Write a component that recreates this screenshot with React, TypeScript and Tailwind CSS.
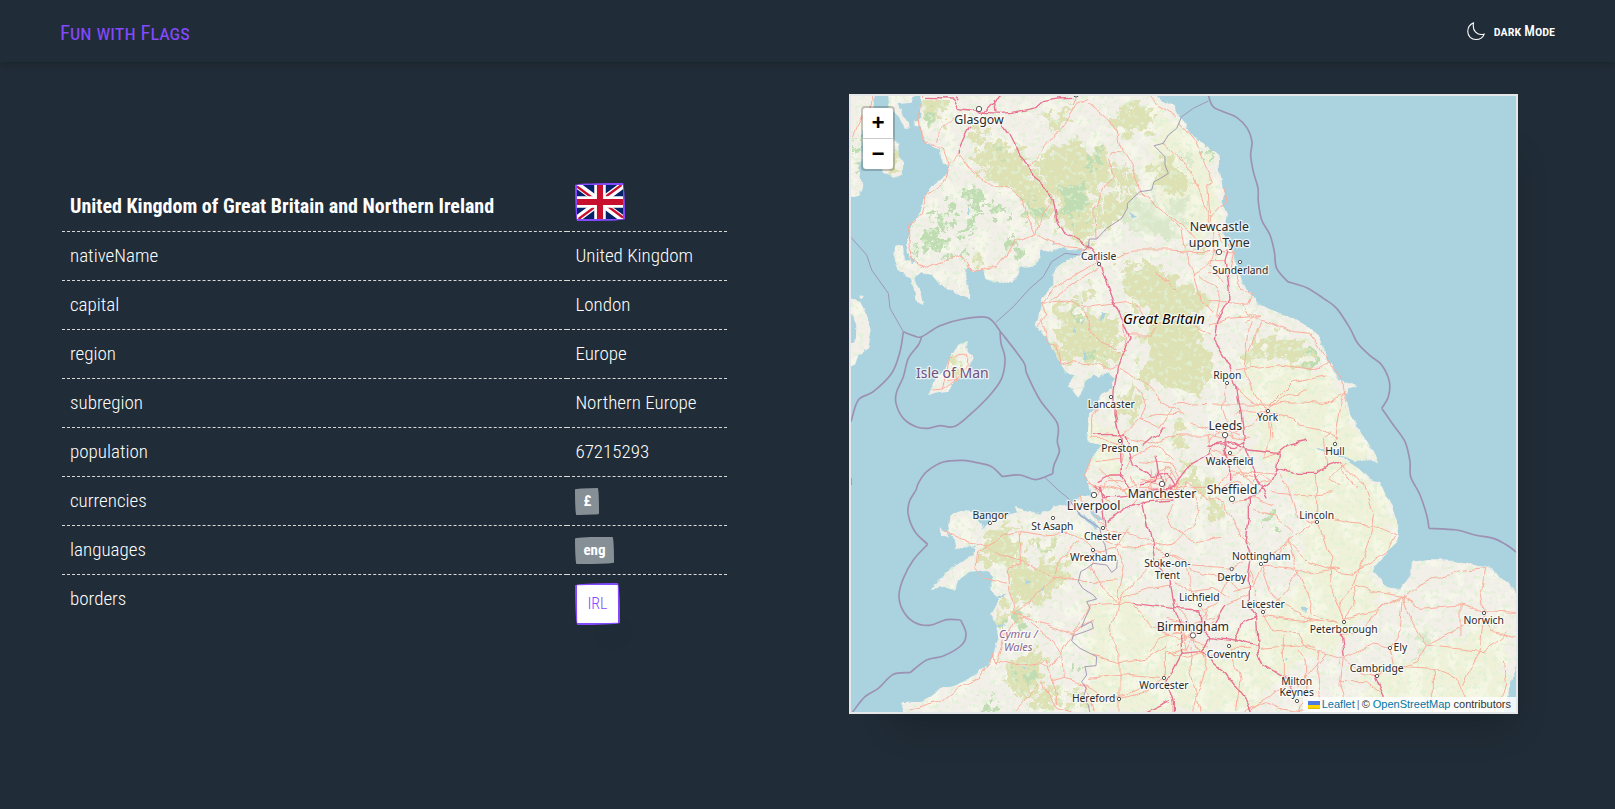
import React from 'react';

type Label = { x: number; y: number; text: string; size?: 'big' | 'small' };

const LAND = [
  // Great Britain
  'M245 20L240 100 245 150 255 175 300 195 305 230 330 245 312 278 285 300 255 330 247 372 215 420 203 465 200 500 212 525 197 528 188 484 165 484 163 520 176 555 210 578 220 620 228 650 250 660 243 625 222 580 245 560 275 570 300 600 330 610 360 630 387 640 388 600 375 560 385 546 400 562 430 555 437 582 460 592 495 595 530 575 545 550 578 545 602 520 600 490 635 500 670 490 705 497 728 492 722 512 685 522 652 545 640 570 640 600 608 642 600 685 585 718 610 750 640 790 658 830 675 866 700 870 684 905 712 935 742 882 760 868 775 885 802 862 822 880 815 905 785 935 765 975 748 990 742 1070 785 1080 755 1120 735 1165 745 1185 755 1235 725 1232 695 1250 685 1275 735 1290 775 1325 765 1335 715 1290 680 1258 640 1270 600 1283 550 1275 525 1265 535 1282 505 1290 468 1302 440 1320 415 1345 395 1380 400 1400 375 1428 350 1435 318 1458 300 1480 275 1512 312 1505 345 1517 355 1485 390 1460 440 1455 458 1475 447 1510 478 1545 453 1590 470 1620 475 1660 460 1710 445 1738 400 1772 350 1800 298 1815 250 1850 215 1852 190 1855 190 1900 1980 1900 1998 1850 2010 1800 2040 1700 2040 1535 2005 1495 1960 1460 1935 1445 1880 1437 1840 1427 1760 1425 1715 1430 1708 1475 1680 1512 1632 1500 1597 1460 1625 1415 1672 1370 1675 1320 1655 1265 1630 1215 1620 1190 1585 1180 1555 1150 1520 1128 1470 1105 1420 1090 1385 1085 1440 1090 1490 1090 1510 1113 1545 1128 1585 1122 1617 1138 1600 1095 1560 1040 1530 990 1518 930 1522 910 1555 904 1500 885 1480 855 1460 825 1450 780 1425 743 1390 715 1345 692 1280 670 1255 655 1230 620 1205 595 1190 545 1180 490 1150 450 1160 395 1145 350 1150 320 1142 270 1135 210 1115 195 1070 165 1040 125 1015 90 1005 60 960 40 940 20Z',
  // Isle of Man
  'M386 765L355 778 335 810 318 850 285 885 262 930 285 920 325 915 350 885 380 860 398 818 384 800Z',
  // Anglesey
  'M332 1290L325 1340 345 1365 350 1395 390 1385 430 1360 425 1325 412 1300 405 1282 365 1278ZM298 1328L322 1340 330 1358 305 1350Z',
  // Irish coast
  'M20 640L60 650 75 680 92 735 80 795 55 810 45 840 20 848 20 790 50 770 52 725 35 690 20 680Z',
  // Kintyre, Arran and Bute
  'M20 20L105 20 100 75 70 110 66 190 55 285 70 300 62 330 20 338Z',
  'M150 155L175 175 176 210 190 235 188 270 165 278 125 262 122 230 140 190Z',
  'M140 20L225 20 215 50 175 55 190 95 210 130 195 132 172 90 145 68Z',
  'M55 630L72 632 66 642 58 640ZM55 158L70 158 72 165 58 165Z',
  'M225 110L238 108 240 120 228 126Z',
].join('');

const ARABLE =
  'M1200 800L1460 870 1520 960 1590 1110 1560 1150 1640 1240 1670 1360 1590 1470 1650 1520 1560 1620 1480 1700 1380 1720 1220 1880 760 1880 740 1560 820 1480 960 1620 1150 1720 1240 1600 1380 1500 1400 1300 1340 1180 1240 1080 1230 950Z M960 60L1100 200 1150 420 1080 470 960 380 920 240Z M740 1000L850 1050 830 1180 760 1160ZM1580 1780L2000 1600 2000 1880 1580 1880Z';

const HEATH =
  'M250 50L310 45 315 90 270 135 250 110ZM385 130L450 145 445 175 385 180ZM400 205L480 175 520 185 560 235 590 280 640 310 630 390 600 415 570 400 540 330 480 300 420 250ZM575 240L630 200 700 160 720 190 815 200 815 280 760 330 765 450 740 470 690 450 670 430 640 330 610 280ZM620 100L700 60 690 110 620 140ZM815 95L870 50 950 75 930 130 860 160ZM780 330L900 320 860 380 820 420 765 450ZM830 240L880 270 885 315 830 310ZM930 230L985 220 1050 290 1030 330 950 300ZM840 530L940 545 1050 610 1110 640 1090 690 1060 760 1110 790 1130 850 1100 900 1020 890 960 850 900 770 930 690 870 640ZM640 700L700 650 730 690 850 700 840 760 820 840 760 830 680 830 650 780ZM710 615L765 625 750 665 710 655ZM935 790L1040 850 1090 870 1080 930 960 900 890 870ZM830 930L900 925 905 980 860 995 835 970ZM985 1055L1035 1010 1040 1070 1000 1080ZM1020 1100L1060 1150 1100 1190 1120 1210 1070 1230 1035 1200ZM1100 1230L1150 1270 1155 1325 1110 1290ZM1225 850L1270 800 1330 815 1390 840 1440 850 1430 820 1400 770 1340 760 1290 730 1250 770 1215 800ZM490 1310L535 1320 520 1380 540 1430 500 1440 420 1430 430 1380 465 1350ZM500 1440L580 1430 640 1440 700 1430 660 1500 620 1550 560 1545 510 1520ZM560 1360L640 1365 640 1400 580 1400ZM480 1560L560 1560 530 1620 470 1600ZM520 1720L590 1690 620 1740 580 1830 540 1850 500 1790ZM580 1830L640 1800 660 1870 560 1880ZM385 540L420 520 430 555 405 560ZM325 830L370 815 365 850 330 865ZM140 170L170 190 180 250 130 255ZM1020 490L1120 470 1110 490 1030 500ZM690 1830L740 1820 740 1880 700 1880Z';

const WOOD =
  'M240 435L290 430 330 460 300 520 250 480ZM270 395L320 390 330 430 290 420ZM360 320L400 290 430 340 410 380 370 350ZM370 400L420 385 400 440 380 450ZM670 310L740 290 750 330 720 410 680 380ZM750 200L780 205 760 250 740 240ZM440 350L500 370 480 410 440 390ZM330 350L350 365 340 390 325 370ZM250 70L290 90 275 125 255 110ZM40 150L65 160 60 190 36 190ZM36 220L65 225 60 255 36 255ZM370 470L400 490 380 520 365 500ZM500 470L550 480 540 510 510 495ZM220 490L240 495 235 510 220 505ZM735 780L770 790 775 830 745 820ZM710 660L725 690 705 710ZM1390 820L1440 830 1420 850 1395 845ZM1380 790L1430 800 1420 815 1385 815ZM500 1600L550 1590 555 1620 510 1630ZM590 1375L640 1385 630 1395 600 1390ZM540 1760L580 1750 570 1800 545 1810ZM420 1850L470 1845 465 1880 425 1880ZM1270 1285L1300 1290 1295 1320 1275 1325ZM700 1730L720 1735 712 1755 700 1750ZM1080 210L1100 190 1105 210 1090 220ZM480 190L500 195 490 220ZM560 330L600 380 590 400 560 380Z';

const PALE_WOOD =
  'M850 360L920 340 1000 400 1000 450 920 460 860 430ZM960 330L1040 360 1050 400 990 390ZM620 170L680 190 650 210 620 200ZM1010 200L1050 220 1030 260ZM1010 20L1030 20 1030 40ZM1730 1610L1780 1630 1780 1700 1735 1710Z';

const LAKES =
  'M380 350L388 385 382 383ZM860 380L895 395 880 400ZM700 715L710 745 702 740ZM735 700L730 720 722 715ZM730 790L735 835 740 815ZM785 680L800 690 775 710ZM640 470L650 480 640 484ZM560 1480L570 1490 560 1500ZM620 1500L600 1520 612 1515ZM1385 1568L1410 1570 1405 1580 1388 1578ZM405 1380L385 1420 400 1410ZM455 1540L500 1528 470 1548ZM470 1620L500 1618 480 1630ZM1340 1720L1346 1725 1340 1732ZM740 1260L790 1300 770 1305ZM210 510L225 530 215 535ZM540 1735L570 1750 550 1745ZM1495 1720L1505 1738 1496 1735Z';

const MOTORWAYS = [
  'M255 40L340 42 355 70 395 75 430 82 480 85 520 82 590 68 610 50 650 42 700 40',
  'M430 82L465 45 485 30M460 42L465 80M355 45L345 35',
  'M387 125L375 150 358 190 358 205M480 110L510 150 540 210 570 240 580 275 610 300 640 345 650 405 670 440 720 465 755 495 775 525 790 570 820 650 850 710 870 760 835 845 825 920 825 990 840 1060 845 1175 870 1210',
  'M762 1050L800 1048 850 1050 858 1070 880 1140 935 1175 985 1165 1005 1200 990 1210',
  'M770 1190L810 1170 850 1170M785 1235L830 1235 900 1225 960 1210 1000 1205 1045 1145 1110 1110 1120 1080 1180 1070 1230 1095 1310 1105 1340 1080 1400 1065',
  'M800 1310L880 1260 930 1250 1000 1245M910 1250L925 1320 940 1400 945 1430 990 1490 1005 1570 1020 1620 1025 1700 980 1790 1000 1850 1000 1885M915 1885L990 1850',
  'M905 1085L935 1060 960 1050 978 1025M945 1115L955 1160 965 1190M775 1200L785 1250 795 1320M900 1200L945 1190 955 1160M1100 1080L1180 1085 1215 1070M760 1200L800 1240',
  'M1165 490L1155 530 1165 590 1170 640 1130 710 1123 770 1170 850 1190 910 1205 1000 1215 1080 1250 1180 1285 1240M1155 1050L1150 1095 1160 1120 1175 1160 1175 1190',
  'M1210 1245L1240 1235 1290 1195 1310 1150 1315 1105M1310 1150L1380 1165 1430 1165 1460 1145 1500 1130M1240 1235L1225 1240 1225 1300 1215 1370 1235 1410 1225 1480 1225 1560 1250 1600 1255 1700 1270 1740 1330 1775 1370 1820',
  'M880 1555L1000 1570 1080 1575 1090 1640 1110 1655 1180 1665 1255 1685M1110 1655L1085 1700 1020 1705M1085 1705L1160 1770 1220 1850 1235 1885M1110 1640L1155 1560M1180 1670L1200 1620 1250 1595',
  'M1500 1640L1510 1715M1600 1770L1630 1835',
];

const ROADS = [
  'M245 33L240 100 250 170 310 190 328 240 318 290 260 330 245 385 215 420 203 470 215 520 255 550 310 530 365 510 385 545 405 560 440 550 470 548 530 470 590 450 610 390 640 345M358 205L400 260 440 295 510 310 545 340 560 390 590 450 680 485 750 492M328 235L358 205M290 170L295 145 340 100 375 90',
  'M575 240L630 170 680 100 710 55 745 40M745 55L800 100 835 140 850 200 880 250 900 320 970 375 1020 430 1030 490M710 30L700 60M930 33L950 60 1010 95M1020 110L1070 170 1100 250 1120 290 1100 300 1105 370 1120 420 1150 470M1020 215L1050 260 1085 340 1110 410M965 175L990 195 1040 240M1000 400L1080 470',
  'M845 200L815 200 805 220 820 270 780 325 765 380 768 465M820 520L880 495 990 495 1060 500 1110 500M775 530L700 570 640 610 605 655 620 690 590 720M605 655L680 645 700 650 740 680 750 740 780 775 830 790M730 665L860 650 900 670 945 720 930 750 870 750M605 700L625 770 650 780 660 840 700 830 770 840 800 850 840 835M830 800L860 800 850 710M620 655L690 600 775 550M840 850L900 885 945 915 960 950 1020 985',
  'M945 715L1000 710 1060 720 1110 745M990 590L950 560 1010 620M1040 500L1060 560 1080 640 1120 690M1060 580L1110 530 1155 530M1110 560L1170 560M1080 570L1120 600 1140 640 1130 700M1180 545L1190 600 1240 630 1225 660 1205 660 1220 690 1265 690 1210 710M1110 650L1170 650 1210 660M1110 720L1170 700 1230 695 1290 710 1360 740 1410 745 1440 790 1460 830M1230 710L1215 850 1190 855M1260 710L1230 800M1215 850L1240 920 1290 1000 1300 1060M1215 850L1320 840 1400 850 1440 850 1460 830 1500 880 1520 920 1515 970M1290 960L1360 890 1460 870M1120 960L1200 960 1290 960 1370 950 1450 955 1510 930M1160 890L1150 970 1180 1060',
  'M890 905L920 960 900 1000 960 1030 1000 960 1100 955M840 1060L900 1000 950 985 1030 990M750 1060L790 1060 830 1080 850 1110 840 1160M760 1120L735 1170 770 1220M850 1060L930 1080 1010 1050 1100 1050 1150 1060M900 1130L1000 1140 1020 1180 1000 1240M860 1150L880 1110 960 1080 1000 1130M755 1060L755 1000 790 950M770 1130L840 1120M780 1150L820 1190 870 1230 960 1230M870 1170L900 1230 880 1260',
  'M740 1195L780 1200 850 1215 900 1190 960 1180M720 1230L770 1290 800 1330 880 1350 940 1380 1010 1370 1060 1320 1080 1280 1060 1230M985 1200L1060 1210 1120 1210 1180 1160 1240 1175M950 1160L990 1150 1010 1180 1010 1230 960 1240 930 1210ZM1040 1190L1100 1240 1150 1250 1200 1350 1230 1380M1000 1260L980 1290 1000 1330 1060 1370 1140 1360',
  'M310 1335L360 1360 435 1380 490 1350 540 1340 610 1350 680 1345 740 1365 760 1390 780 1400M440 1380L410 1400 405 1450 430 1480 500 1495M440 1385L480 1410 550 1430 640 1480 740 1490 830 1485M540 1340L545 1440 505 1450 510 1520 520 1585M520 1585L580 1540 640 1480 660 1420 720 1370M520 1585L570 1600 640 1630 700 1650 740 1620 770 1600M455 1700L465 1740 490 1660 520 1610 570 1590M460 1710L420 1780 350 1810 300 1850 215 1875M600 1730L630 1750 665 1700 720 1620 750 1560 830 1555 880 1555',
  'M520 1880L600 1790 650 1870 690 1880M465 1730L520 1740 600 1730 620 1720 640 1790 650 1860M665 1700L670 1780 640 1790M670 1780L740 1800 760 1880M740 1780L850 1770 960 1780M560 1600L620 1650 665 1700',
  'M830 1555L780 1500 750 1450 760 1400 830 1390 870 1320M830 1555L850 1440 830 1390M830 1555L880 1490 950 1430 990 1400M830 1555L810 1650 840 1710 840 1880M840 1730L920 1720 980 1680M880 1560L930 1620 990 1650M840 1840L920 1820 970 1780 970 1700M740 1800L790 1840 830 1840 900 1810M760 1710L840 1730M780 1360L850 1390 940 1385M850 1540L940 1510 990 1500',
  'M945 1390L990 1410 1080 1470 1170 1480 1200 1520M990 1410L1060 1440 1175 1450 1225 1420 1280 1420 1345 1370M1000 1490L1050 1520 1120 1510 1170 1540M1010 1560L1040 1600 1060 1650 1090 1720 1170 1700M960 1640L1010 1660 1060 1650 1110 1620 1160 1560 1225 1530M980 1710L1040 1690 1060 1650M1060 1650L1050 1750 1080 1880M1060 1650L1100 1750 1060 1880M980 1600L1060 1620 1120 1600M970 1700L1040 1720 1100 1700M1080 1560L1100 1590 1090 1640M1020 1640L960 1660 930 1700M1170 1690L1200 1780 1190 1880M1170 1690L1230 1690M1040 1450L1060 1550M1175 1460L1130 1550 1090 1570',
  'M1190 910L1250 960 1283 970 1340 930 1400 920M1283 980L1360 1000 1380 1020 1440 1030 1490 1060M1283 985L1220 980 1190 990M1283 985L1290 1060 1270 1120 1310 1105M1180 1040L1230 1020 1283 975M1480 1080L1500 960 1520 920M1460 1145L1450 1060 1470 1040M1155 1045L1110 1030 1050 1010M1155 1045L1190 1060 1230 1060M1100 1050L1120 1120 1180 1130 1230 1120M1175 1190L1200 1160 1300 1170M1180 1130L1240 1200 1290 1190 1260 1170 1240 1190',
  'M1310 1150L1350 1220 1370 1300 1430 1310M1345 1370L1430 1300 1430 1210 1425 1165M1440 1290L1520 1310 1600 1320 1670 1350M1440 1320L1470 1420 1480 1520 1512 1600M1345 1370L1400 1430 1500 1460 1540 1465 1640 1400 1670 1350M1500 1130L1570 1200 1600 1290 1590 1360 1560 1440 1540 1500 1545 1560 1512 1605M1500 1140L1550 1210M1520 1130L1470 1180 1500 1200M1300 1220L1400 1230 1480 1220M1240 1270L1300 1290 1360 1340 1345 1370M1180 1250L1250 1240 1300 1260M1345 1370L1370 1450 1410 1540 1420 1590 1490 1620',
  'M1265 1440L1360 1450 1400 1465 1500 1450M1265 1440L1290 1520 1330 1560 1400 1600 1490 1620M1265 1440L1240 1500 1180 1520M1265 1430L1320 1400 1345 1370M1230 1440L1250 1560 1270 1580 1300 1560 1380 1460M1265 1580L1300 1640 1380 1640 1400 1690 1440 1700 1510 1720M1265 1590L1330 1600 1440 1610M1260 1690L1370 1680 1430 1690M1330 1650L1330 1770 1380 1800 1460 1710M1370 1690L1400 1740 1400 1830 1370 1880M1440 1700L1430 1770 1440 1860',
  'M1512 1600L1600 1580 1690 1535 1760 1490 1860 1460 1935 1450 1920 1520 1930 1585M1690 1535L1680 1640 1650 1690 1660 1740 1610 1770M1500 1645L1560 1640 1620 1570 1690 1530M1545 1500L1600 1520 1690 1535M1690 1535L1740 1570 1860 1560 1930 1580 2028 1585M1690 1540L1720 1620 1760 1680 1840 1640 1930 1590M1760 1680L1730 1730 1690 1745 1620 1760M1690 1745L1780 1750 1850 1780 1880 1850 1880 1890M1760 1680L1840 1690 1930 1700 2000 1640M1930 1600L1960 1640 2028 1660M1930 1600L1920 1700 1870 1800M1510 1720L1600 1680 1650 1690M1510 1720L1560 1760 1610 1775 1660 1740M1510 1720L1500 1800 1520 1880M1500 1790L1580 1790 1630 1830 1620 1880M1780 1750L1780 1880M1540 1490L1500 1550 1512 1600M1860 1560L1860 1650M1960 1890L2000 1800 1990 1730',
  'M1210 1880L1280 1850 1330 1870 1400 1880M1230 1880L1300 1820 1370 1780M330 818L384 812 380 845 345 890 310 915 280 918M330 815L320 870 310 915M345 860L350 885 325 890M95 33L95 75M36 160L50 120 66 90M1150 310L1160 350 1110 400M1150 430L1180 500 1170 560M1130 470L1110 540 1150 560M1100 500L1180 500M1120 420L1125 520M1130 560L1150 590M900 1180L960 1200 1000 1160M930 1150L940 1240 1020 1240 1040 1190M980 1150L960 1250M900 1210L1020 1210M1100 1070L1150 1030 1200 1050M1120 1100L1180 1110 1210 1090M1140 1210L1200 1190 1220 1220M760 1230L800 1190 850 1190M780 1230L820 1260M1020 1600L1040 1700M1000 1640L1110 1680M1010 1680L1080 1620 1100 1570',
];

// Open polylines, drawn as smooth curves through their points.
const SEA_BORDERS: [number, number][][] = [
  [[33, 1010], [55, 945], [100, 920], [155, 865], [180, 800], [190, 740]],
  [[190, 740], [220, 752], [245, 755], [300, 722], [370, 702], [443, 698], [480, 738]],
  [[480, 738], [550, 830], [560, 865], [600, 945], [652, 1015], [652, 1070], [658, 1100], [642, 1140], [638, 1166]],
  [[638, 1166], [587, 1184], [540, 1170], [487, 1175]],
  [[487, 1175], [455, 1145], [410, 1133], [370, 1126], [310, 1131], [260, 1160], [235, 1195], [228, 1215], [208, 1250], [205, 1290], [225, 1340], [263, 1378]],
  [[263, 1378], [220, 1425], [190, 1480], [177, 1530], [188, 1575], [220, 1610], [268, 1621], [320, 1604], [362, 1605]],
  [[362, 1605], [378, 1645], [365, 1680], [310, 1713], [260, 1725], [210, 1763]],
  [[210, 1763], [160, 1768], [115, 1810], [75, 1835], [38, 1881]],
  [[245, 755], [235, 780], [205, 820], [190, 875], [170, 920], [168, 955], [190, 1000], [230, 1026], [265, 1030], [300, 1022], [345, 1024], [400, 980], [450, 930], [485, 880], [495, 820], [483, 775], [480, 738]],
  [[33, 1180], [33, 1200]],
  [[1102, 20], [1118, 64], [1150, 80], [1190, 97], [1222, 130], [1236, 170], [1232, 210], [1240, 260], [1254, 310], [1255, 350], [1265, 405], [1290, 450], [1303, 500], [1310, 550], [1343, 590]],
  [[1343, 590], [1400, 608], [1450, 640], [1490, 670], [1530, 730], [1553, 775], [1590, 812], [1625, 840], [1648, 890], [1645, 935], [1625, 970]],
  [[1625, 970], [1660, 1020], [1695, 1070], [1710, 1130], [1712, 1175], [1740, 1230], [1760, 1290], [1767, 1330]],
  [[1767, 1330], [1850, 1335], [1905, 1350], [1960, 1360], [2000, 1380], [2040, 1410]],
];

function smooth(points: [number, number][]) {
  let d = `M${points[0][0]} ${points[0][1]}`;
  for (let i = 0; i < points.length - 1; i++) {
    const a = points[Math.max(i - 1, 0)];
    const b = points[i];
    const c = points[i + 1];
    const e = points[Math.min(i + 2, points.length - 1)];
    d += `C${b[0] + (c[0] - a[0]) / 6} ${b[1] + (c[1] - a[1]) / 6} ${c[0] - (e[0] - b[0]) / 6} ${c[1] - (e[1] - b[1]) / 6} ${c[0]} ${c[1]}`;
  }
  return d;
}

const THIN_BORDERS = [
  'M33 457L80 510 95 555 145 625 150 670 190 740M468 712L520 665 570 610 610 575 635 530 675 505 720 510 745 485 748 462 770 462 800 430 830 410 845 400 862 370 862 355 900 320 935 315 942 290 962 280 985 265 975 240 975 215 955 195 942 182 970 175 985 150 1010 130 1025 95 1060 70 1105 48',
  'M615 1178L660 1220 685 1240 720 1290 750 1310 780 1330 785 1360 795 1380 800 1410 795 1425 832 1425 830 1450 815 1462 800 1440 760 1435 740 1450 722 1460 715 1490 728 1510 760 1530 770 1542 740 1550 750 1570 735 1600 725 1625 755 1610 760 1630 740 1638 700 1652 695 1668 720 1690 760 1710 770 1715 768 1742 735 1745 740 1770 725 1790 738 1810 730 1840 745 1860 750 1885',
];

const TOWNS: [number, number][] = [
  [777, 537], [1200, 531], [1161, 894], [813, 936], [840, 1068], [1284, 978], [1170, 1104], [1485, 1077],
  [1431, 1311], [450, 1314], [639, 1299], [789, 1329], [759, 1395], [981, 1410], [1263, 1437], [1175, 1452],
  [1080, 1560], [1269, 1581], [1512, 1611], [1650, 1689], [1932, 1584], [1611, 1773], [1167, 1683],
  [1371, 1848], [972, 1779], [837, 1842],
];

const CITIES: [number, number][] = [[417, 72], [708, 28], [1137, 501], [1155, 1050], [966, 1197], [1176, 1242], [762, 1230], [1059, 1651]];

const LABELS: Label[] = [
  { x: 417, y: 117, text: 'Glasgow', size: 'big' },
  { x: 1138, y: 438, text: 'Newcastle', size: 'big' },
  { x: 1138, y: 486, text: 'upon Tyne', size: 'big' },
  { x: 1156, y: 1036, text: 'Leeds', size: 'big' },
  { x: 966, y: 1238, text: 'Manchester', size: 'big' },
  { x: 1176, y: 1228, text: 'Sheffield', size: 'big' },
  { x: 761, y: 1274, text: 'Liverpool', size: 'big' },
  { x: 1059, y: 1637, text: 'Birmingham', size: 'big' },
  { x: 776, y: 524, text: 'Carlisle' },
  { x: 1201, y: 567, text: 'Sunderland' },
  { x: 1162, y: 882, text: 'Ripon' },
  { x: 814, y: 968, text: 'Lancaster' },
  { x: 840, y: 1102, text: 'Preston' },
  { x: 1283, y: 1008, text: 'York' },
  { x: 1169, y: 1140, text: 'Wakefield' },
  { x: 1485, y: 1109, text: 'Hull' },
  { x: 1430, y: 1301, text: 'Lincoln' },
  { x: 451, y: 1301, text: 'Bangor' },
  { x: 637, y: 1335, text: 'St Asaph' },
  { x: 788, y: 1365, text: 'Chester' },
  { x: 760, y: 1428, text: 'Wrexham' },
  { x: 982, y: 1445, text: 'Stoke-on-' },
  { x: 982, y: 1481, text: 'Trent' },
  { x: 1264, y: 1426, text: 'Nottingham' },
  { x: 1175, y: 1488, text: 'Derby' },
  { x: 1078, y: 1547, text: 'Lichfield' },
  { x: 1269, y: 1569, text: 'Leicester' },
  { x: 1511, y: 1645, text: 'Peterborough' },
  { x: 1681, y: 1699, text: 'Ely' },
  { x: 1931, y: 1617, text: 'Norwich' },
  { x: 1610, y: 1762, text: 'Cambridge' },
  { x: 1165, y: 1718, text: 'Coventry' },
  { x: 1370, y: 1799, text: 'Milton' },
  { x: 1370, y: 1834, text: 'Keynes' },
  { x: 972, y: 1812, text: 'Worcester' },
  { x: 761, y: 1852, text: 'Hereford' },
];

function MapDrawing() {
  return (
    <svg
      viewBox="33 33 1995 1848"
      preserveAspectRatio="xMidYMid slice"
      className="block h-full w-full bg-[#aad3df]"
      role="img"
      aria-label="Map of northern England, Wales and southern Scotland"
    >
      <defs>
        <filter id="coast" x="0" y="0" width="100%" height="100%">
          <feTurbulence type="fractalNoise" baseFrequency="0.03" numOctaves="3" seed="4" result="n" />
          <feDisplacementMap in="SourceGraphic" in2="n" scale="20" xChannelSelector="R" yChannelSelector="G" />
        </filter>
        <filter id="ragged" x="0" y="0" width="100%" height="100%">
          <feTurbulence type="fractalNoise" baseFrequency="0.03" numOctaves="4" seed="9" result="n" />
          <feDisplacementMap in="SourceGraphic" in2="n" scale="110" xChannelSelector="R" yChannelSelector="G" />
        </filter>
        <filter id="wiggle" x="0" y="0" width="100%" height="100%">
          <feTurbulence type="fractalNoise" baseFrequency="0.02" numOctaves="2" seed="2" result="n" />
          <feDisplacementMap in="SourceGraphic" in2="n" scale="24" xChannelSelector="R" yChannelSelector="G" />
        </filter>
        <filter id="speckle" x="0" y="0" width="100%" height="100%">
          <feTurbulence type="fractalNoise" baseFrequency="0.07" numOctaves="3" seed="21" />
          <feColorMatrix values="0 0 0 0 0.74  0 0 0 0 0.87  0 0 0 0 0.66  0 9 0 0 -5.1" />
        </filter>
        <filter id="fields" x="0" y="0" width="100%" height="100%">
          <feTurbulence type="fractalNoise" baseFrequency="0.02" numOctaves="4" seed="33" />
          <feColorMatrix values="0 0 0 0 0.94  0 0 0 0 0.955  0 0 0 0 0.84  6 0 0 0 -2.9" />
        </filter>
        <clipPath id="land">
          <path d={LAND} />
        </clipPath>
      </defs>
      <g filter="url(#coast)">
        <rect x="0" y="0" width="2060" height="1920" fill="#aad3df" />
        <path d={LAND} fill="#f2efe9" />
      </g>
      <g clipPath="url(#land)">
        <g filter="url(#ragged)">
          <path d={ARABLE} fill="#eff2d9" />
          <path d={PALE_WOOD} fill="#dbe7cb" />
        </g>
        <rect x="0" y="0" width="2060" height="1920" filter="url(#fields)" opacity="0.6" />
        <g filter="url(#ragged)">
          <path d={HEATH} fill="#dde1b4" />
          <path d={WOOD} fill="#c0dcb2" />
        </g>
        <rect x="0" y="0" width="2060" height="1920" filter="url(#speckle)" opacity="0.75" />
      </g>
      <path d={LAKES} fill="#aad3df" filter="url(#coast)" />
      <g fill="none" strokeLinejoin="round" filter="url(#wiggle)">
        <path d={ROADS.join('')} stroke="#fbae9c" strokeWidth="3" />
        <path d={MOTORWAYS.join('')} stroke="#e8718f" strokeWidth="4" />
      </g>
      <g fill="none" stroke="#9d91b3" strokeLinejoin="round">
        <path d={SEA_BORDERS.map(smooth).join('')} strokeWidth="5" />
        <path d={THIN_BORDERS.join('')} strokeWidth="3" opacity="0.9" />
      </g>
      <g fill="#ffffff" stroke="#5a5a5a" strokeWidth="3">
        {TOWNS.map(([x, y]) => (
          <circle key={`${x}-${y}`} cx={x} cy={y} r="5" />
        ))}
        {CITIES.map(([x, y]) => (
          <circle key={`${x}-${y}`} cx={x} cy={y} r="8" />
        ))}
      </g>
      <g
        textAnchor="middle"
        fill="#2b2b2b"
        stroke="#ffffff"
        strokeOpacity="0.7"
        strokeWidth="8"
        strokeLinejoin="round"
        paintOrder="stroke"
        className="font-['Noto_Sans',sans-serif]"
      >
        {LABELS.map(({ x, y, text, size }) => (
          <text key={text} x={x} y={y} fontSize={size === 'big' ? 37 : 31}>
            {text}
          </text>
        ))}
        <text x="972" y="718" fontSize="43" fontStyle="italic" fill="#000000">
          Great Britain
        </text>
        <text x="337" y="879" fontSize="42" fill="#734f7c">
          Isle of Man
        </text>
        <text x="535" y="1658" fontSize="33" fontStyle="italic" fill="#8a6791">
          Cymru /
        </text>
        <text x="535" y="1697" fontSize="33" fontStyle="italic" fill="#8a6791">
          Wales
        </text>
      </g>
    </svg>
  );
}

function UnionJack() {
  return (
    <svg
      viewBox="0 0 60 45"
      preserveAspectRatio="none"
      role="img"
      aria-label="Flag of the United Kingdom"
      className="block h-[38px] w-[50px] rounded-[255px_15px_225px_15px/15px_225px_15px_255px] border-2 border-[#8549ff]"
    >
      <path fill="#012169" d="M0 0h60v45H0z" />
      <path stroke="#ffffff" strokeWidth="9" d="M0 0l60 45M60 0L0 45" />
      <path stroke="#c8102e" strokeWidth="3" d="M0 2l26 19.500M60 43L34 23.500M58 0L32 19.500M2 45l26-19.500" />
      <path stroke="#ffffff" strokeWidth="15" d="M30 0v45M0 22.500h60" />
      <path stroke="#c8102e" strokeWidth="8" d="M30 0v45M0 22.500h60" />
    </svg>
  );
}

function Badge({ children }: { children: React.ReactNode }) {
  return (
    <span className="block w-fit rounded-[255px_15px_225px_15px/15px_225px_15px_255px] bg-[#868e96] px-2 py-1 text-[15px] leading-[19px] font-bold">
      {children}
    </span>
  );
}

const ROWS: { name: string; value: React.ReactNode }[] = [
  { name: 'nativeName', value: 'United Kingdom' },
  { name: 'capital', value: 'London' },
  { name: 'region', value: 'Europe' },
  { name: 'subregion', value: 'Northern Europe' },
  { name: 'population', value: '67215293' },
  { name: 'currencies', value: <Badge>£</Badge> },
  { name: 'languages', value: <Badge>eng</Badge> },
];

export default function App() {
  return (
    <div className="min-h-screen bg-[#202c37] font-['Roboto_Condensed','Liberation_Sans',sans-serif] text-white">
      <header className="flex h-[62px] items-center justify-between px-[60px] shadow-[0_2px_8px_rgba(0,0,0,0.2)]">
        <a href="#" className="pt-1 text-[21px] leading-8 text-[#8549ff] [font-variant:small-caps]">
          Fun with Flags
        </a>
        <button type="button" className="flex items-center gap-2 text-sm leading-6 font-medium [font-variant:small-caps]">
          <svg viewBox="0 0 512 512" className="size-5" fill="none" stroke="currentColor" strokeWidth="28" strokeLinejoin="round" strokeLinecap="round" aria-hidden="true">
            <path d="M195 45C100 85 45 170 45 270C45 390 140 475 255 475C355 475 435 420 470 330C445 340 420 345 395 345C280 345 185 250 185 125C185 95 187 70 195 45z" />
          </svg>
          dark Mode
        </button>
      </header>

      <main className="grid grid-cols-[665fr_669fr] items-center gap-x-[122px] pt-8 pr-[97px] pb-24 pl-[62px]">
        <table className="w-full table-fixed border-collapse text-left text-[19px] leading-8 font-light">
          <thead>
            <tr className="h-[57px] border-b border-dashed border-[#d9d9d8]">
              <th scope="col" className="w-[76%] px-2 pt-[14px] pb-2 align-middle text-xl leading-8 font-bold">
                United Kingdom of Great Britain and Northern Ireland
              </th>
              <th scope="col" className="px-2 pt-2 pb-[10px] align-middle">
                <UnionJack />
              </th>
            </tr>
          </thead>
          <tbody>
            {ROWS.map(({ name, value }) => (
              <tr key={name} className="h-[49px] border-b border-dashed border-[#d9d9d8]">
                <td className="px-2 align-middle">{name}</td>
                <td className="px-2 align-middle">{value}</td>
              </tr>
            ))}
            <tr>
              <td className="p-2 align-top">borders</td>
              <td className="p-2 align-top">
                <button
                  type="button"
                  className="block rounded-[255px_15px_225px_15px/15px_225px_15px_255px] border-2 border-[#8549ff] bg-white px-[10px] py-[9px] text-base leading-5 font-light text-[#8549ff] shadow-[15px_28px_25px_-18px_rgba(0,0,0,0.2)]"
                >
                  IRL
                </button>
              </td>
            </tr>
          </tbody>
        </table>

        <section
          aria-label="Map"
          className="relative h-[620px] border-2 border-[#e6e7e9] shadow-[20px_38px_34px_-26px_rgba(0,0,0,0.2)]"
        >
          <MapDrawing />
          <div className="absolute top-[10px] left-[10px] flex flex-col rounded border-2 border-black/20 bg-clip-padding font-['Liberation_Mono',monospace] text-[22px] leading-[26px] font-bold text-black">
            <button type="button" aria-label="Zoom in" className="h-[31px] w-[30px] rounded-t-sm border-b border-[#cccccc] bg-white pt-1">
              +
            </button>
            <button type="button" aria-label="Zoom out" className="h-[30px] w-[30px] rounded-b-sm bg-white pt-1">
              −
            </button>
          </div>
          <p className="absolute right-0 bottom-0 flex items-center gap-[2px] bg-white/80 px-[5px] font-['Liberation_Sans',sans-serif] text-[11px] leading-[15px] text-[#333333]">
            <svg viewBox="0 0 12 8" className="h-2 w-3" aria-hidden="true">
              <path fill="#4c7be1" d="M0 0h12v4H0z" />
              <path fill="#ffd500" d="M0 4h12v3H0z" />
              <path fill="#e0bc00" d="M0 7h12v1H0z" />
            </svg>
            <a href="#leaflet" className="text-[#0078a8]">
              Leaflet
            </a>
            <span className="text-[#777777]">|</span>
            <span>
              © <a href="#osm" className="text-[#0078a8]">OpenStreetMap</a> contributors
            </span>
          </p>
        </section>
      </main>
    </div>
  );
}
